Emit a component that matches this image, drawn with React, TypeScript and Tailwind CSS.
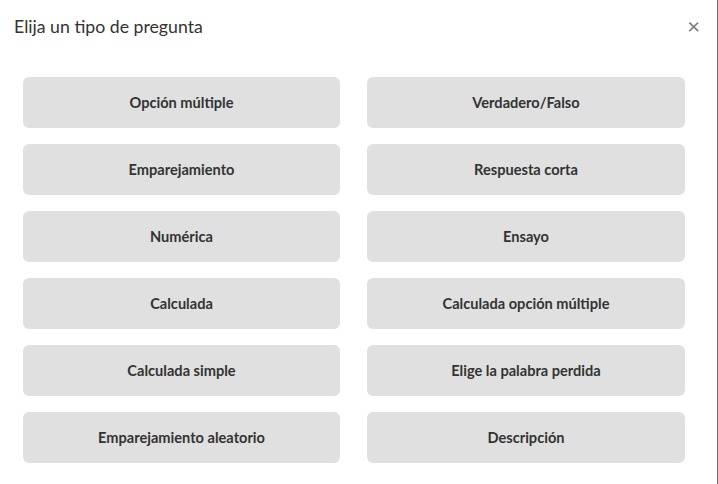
import React from 'react';

const types: string[] = [
    'Opción múltiple',
    'Verdadero/Falso',
    'Emparejamiento',
    'Respuesta corta',
    'Numérica',
    'Ensayo',
    'Calculada',
    'Calculada opción múltiple',
    'Calculada simple',
    'Elige la palabra perdida',
    'Emparejamiento aleatorio',
    'Descripción',
];

const App: React.FC = () => {
    return (
        <div className="flex h-[484px] w-[718px] bg-white" style={{ fontFamily: 'Lato, "Open Sans", sans-serif' }}>
            <div className="flex flex-1 flex-col">
                <div className="flex h-[56px] items-center justify-between pl-[14px] pr-[17px]">
                    <h1 className="pb-[3px] text-[17.7px] leading-none text-[#333]">Elija un tipo de pregunta</h1>
                    <button className="pb-[4px] text-[22px] leading-none text-[#777]">×</button>
                </div>
                <div className="grid grid-cols-[317px_318px] gap-x-[27px] gap-y-[16px] pl-[23px] pt-[21px]">
                    {types.map((t) => (
                        <button
                            key={t}
                            className="flex h-[51px] items-center justify-center rounded-[6px] bg-[#e0e0e0] pt-[1px] text-[14.6px] font-bold text-[#333]"
                        >
                            {t}
                        </button>
                    ))}
                </div>
            </div>
            <div className="w-[1px] bg-[#6f6f6f]" />
        </div>
    );
};

export default App;
